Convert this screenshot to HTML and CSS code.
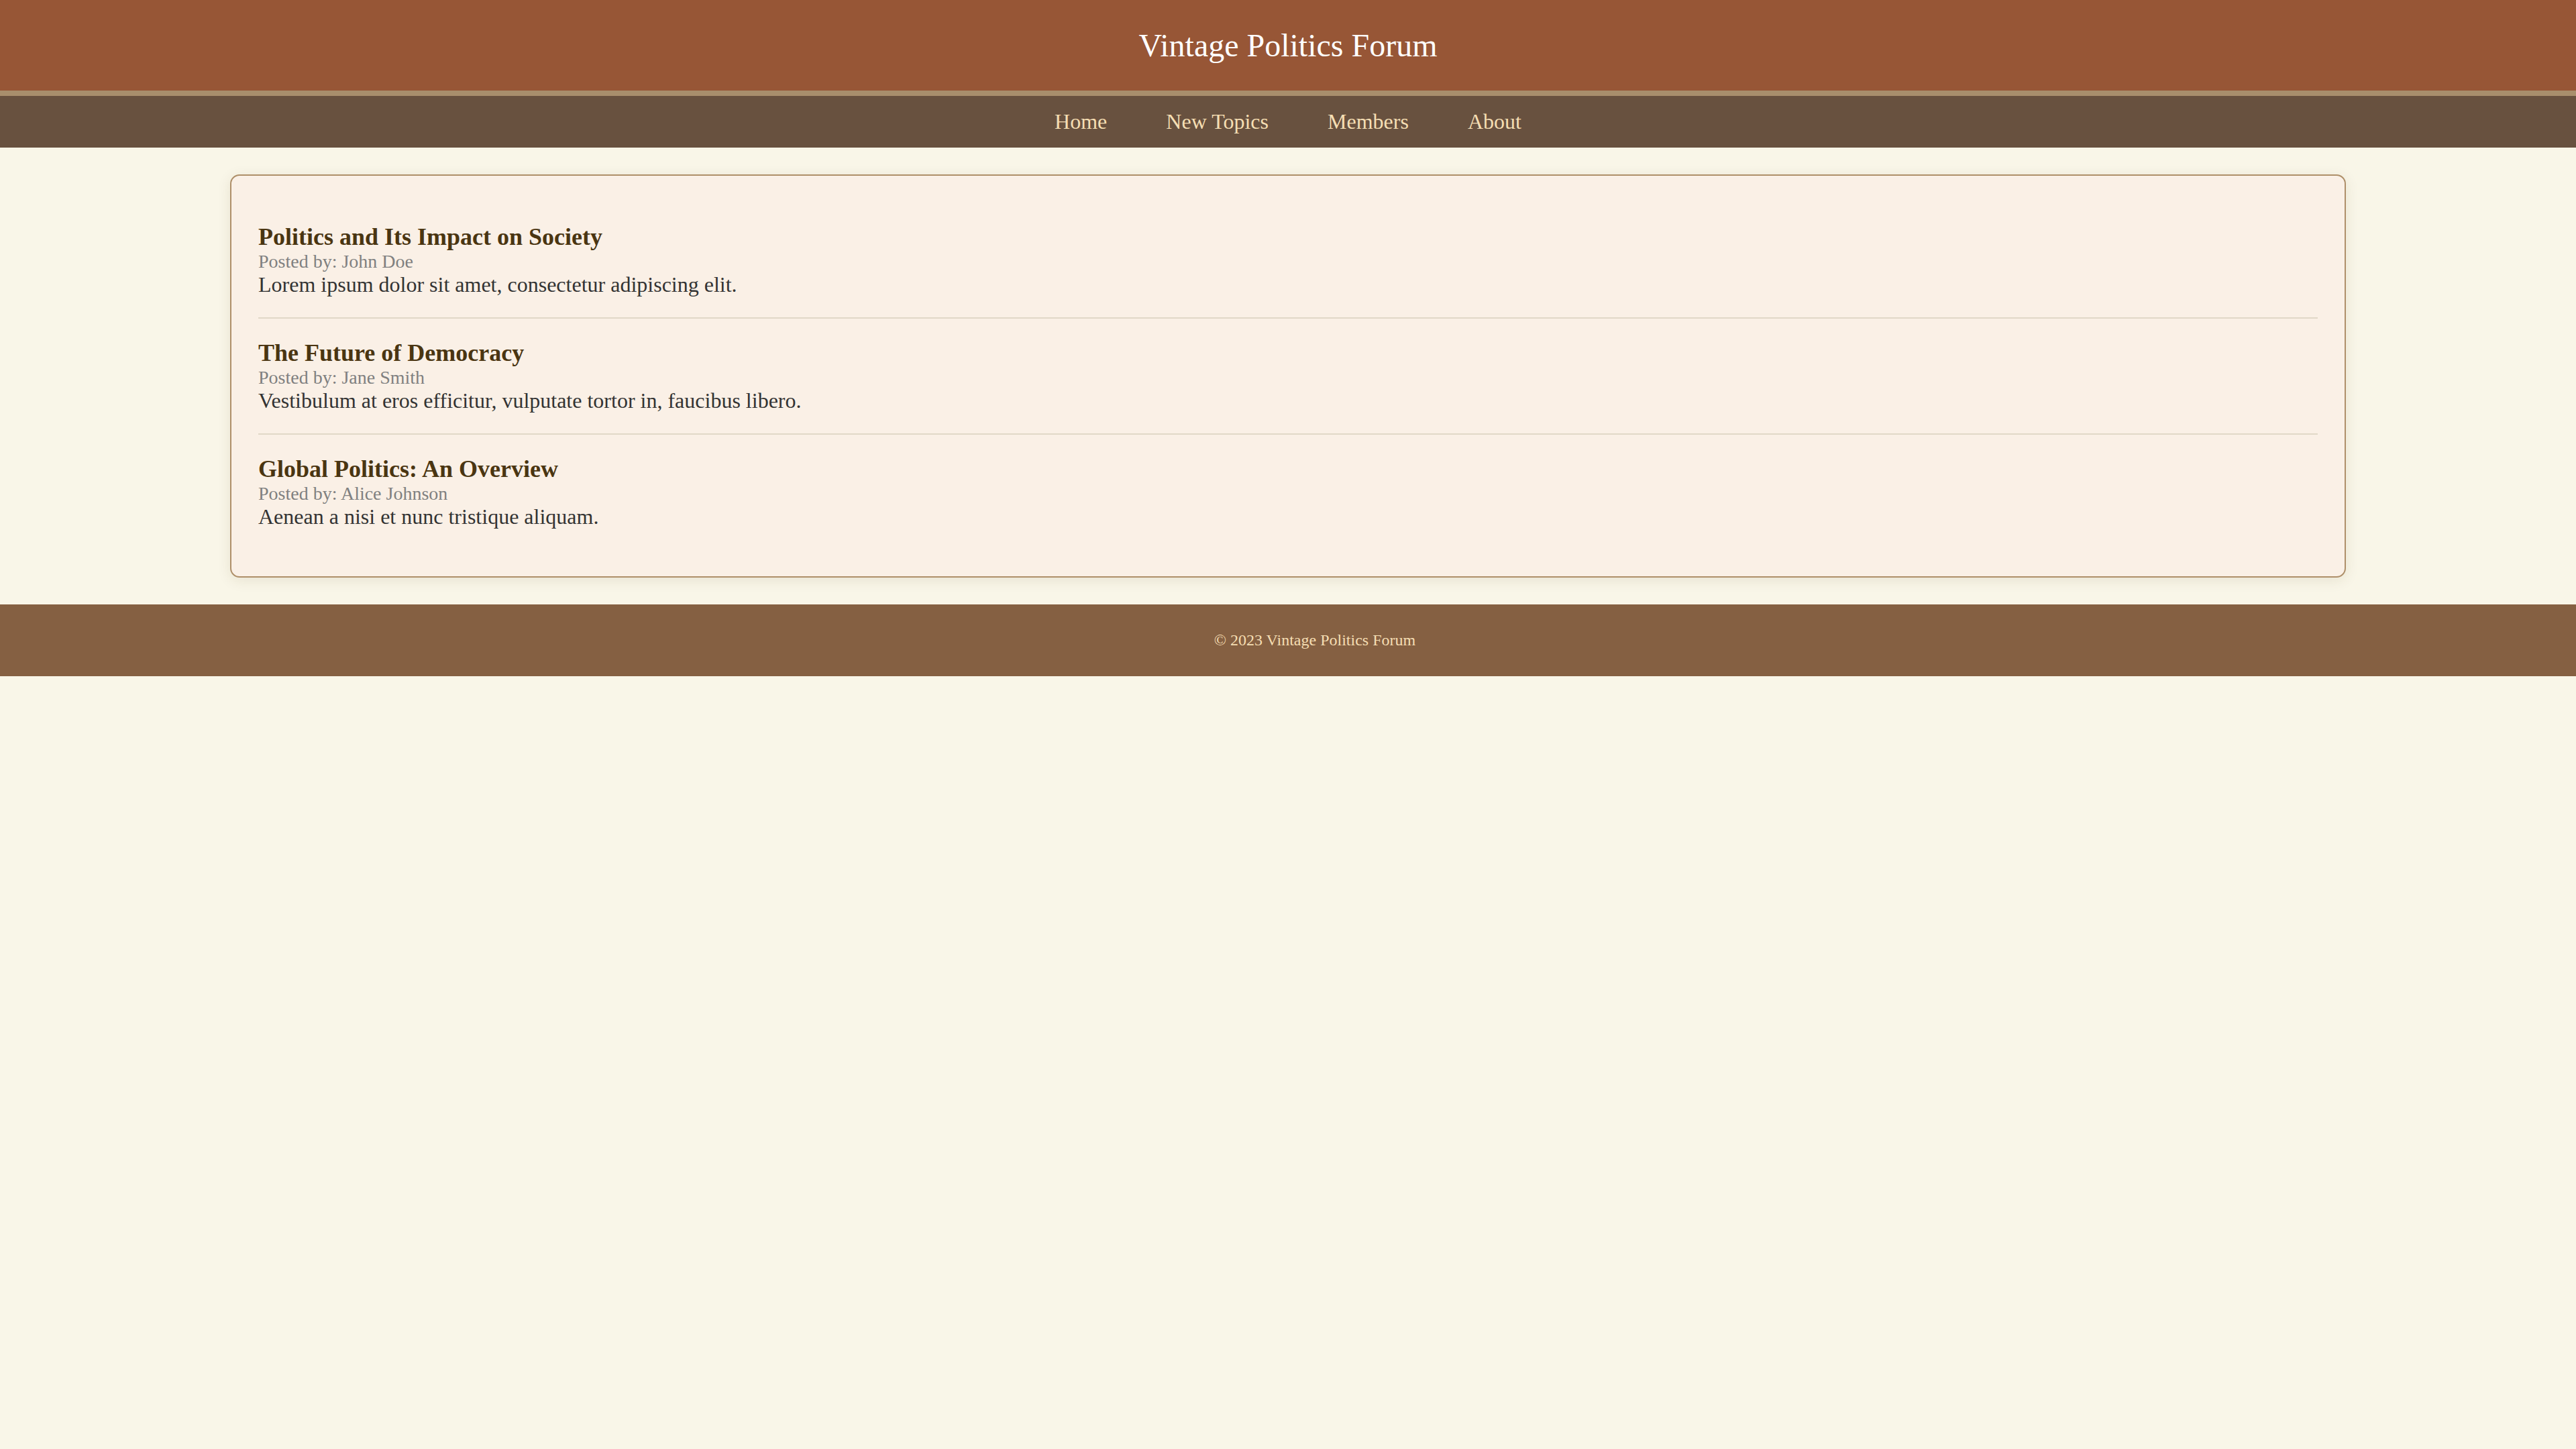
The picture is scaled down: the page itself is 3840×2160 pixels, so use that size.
FILE: index.html
```html
<!DOCTYPE html>
<html lang="en">
<head>
<meta charset="utf-8">
<title>Vintage Politics Forum</title>
<link rel="stylesheet" href="styles.css">
</head>
<body>
<header class="site-header">
  <h1 class="site-title">Vintage Politics Forum</h1>
</header>
<nav class="site-nav">
  <a class="nav-link" href="#">Home</a>
  <a class="nav-link" href="#">New Topics</a>
  <a class="nav-link" href="#">Members</a>
  <a class="nav-link" href="#">About</a>
</nav>
<main class="forum">
  <article class="post">
    <h2 class="post-title">Politics and Its Impact on Society</h2>
    <div class="post-meta">Posted by: John Doe</div>
    <p class="post-body">Lorem ipsum dolor sit amet, consectetur adipiscing elit.</p>
  </article>
  <article class="post">
    <h2 class="post-title">The Future of Democracy</h2>
    <div class="post-meta">Posted by: Jane Smith</div>
    <p class="post-body">Vestibulum at eros efficitur, vulputate tortor in, faucibus libero.</p>
  </article>
  <article class="post">
    <h2 class="post-title">Global Politics: An Overview</h2>
    <div class="post-meta">Posted by: Alice Johnson</div>
    <p class="post-body">Aenean a nisi et nunc tristique aliquam.</p>
  </article>
</main>
<footer class="site-footer">
  <p class="footer-text">&copy; 2023 Vintage Politics Forum</p>
</footer>
</body>
</html>
```

FILE: styles.css
```css
html, body {
  margin: 0;
  padding: 0;
}

body {
  background: #f9f6e8;
  font-family: "Liberation Serif", "Times New Roman", serif;
  font-size: 32px;
  color: #333333;
}

.site-header {
  background: #975636;
  padding: 40px 0;
  border-bottom: 8px solid #a88e6c;
  text-align: center;
}

.site-title {
  margin: 0;
  font-size: 48px;
  font-weight: normal;
  color: #ffffff;
}

.site-nav {
  background: #68513f;
  padding: 20px 0;
  display: flex;
  justify-content: center;
  gap: 88px;
}

.nav-link {
  color: #f5deb3;
  text-decoration: none;
  font-size: 32px;
}

.forum {
  max-width: 3154px;
  margin: 40px auto;
  background: #faf0e6;
  border: 2px solid #ae8f69;
  border-radius: 14px;
  padding: 40px;
  box-shadow: 0 4px 20px rgba(80, 60, 20, 0.1);
  box-sizing: border-box;
}

.post {
  padding: 30px 0;
  border-bottom: 2px solid #e1d8c7;
}

.post:last-child {
  border-bottom: none;
}

.post-title {
  margin: 0;
  font-size: 36px;
  font-weight: bold;
  color: #4a3511;
}

.post-meta {
  font-size: 28px;
  color: #808080;
}

.post-body {
  margin: 0;
  font-size: 32px;
  color: #333333;
}

.site-footer {
  background: #856042;
  padding: 40px 0 40px 80px;
  text-align: center;
}

.footer-text {
  margin: 0;
  font-size: 24px;
  color: #f5deb3;
}
```
